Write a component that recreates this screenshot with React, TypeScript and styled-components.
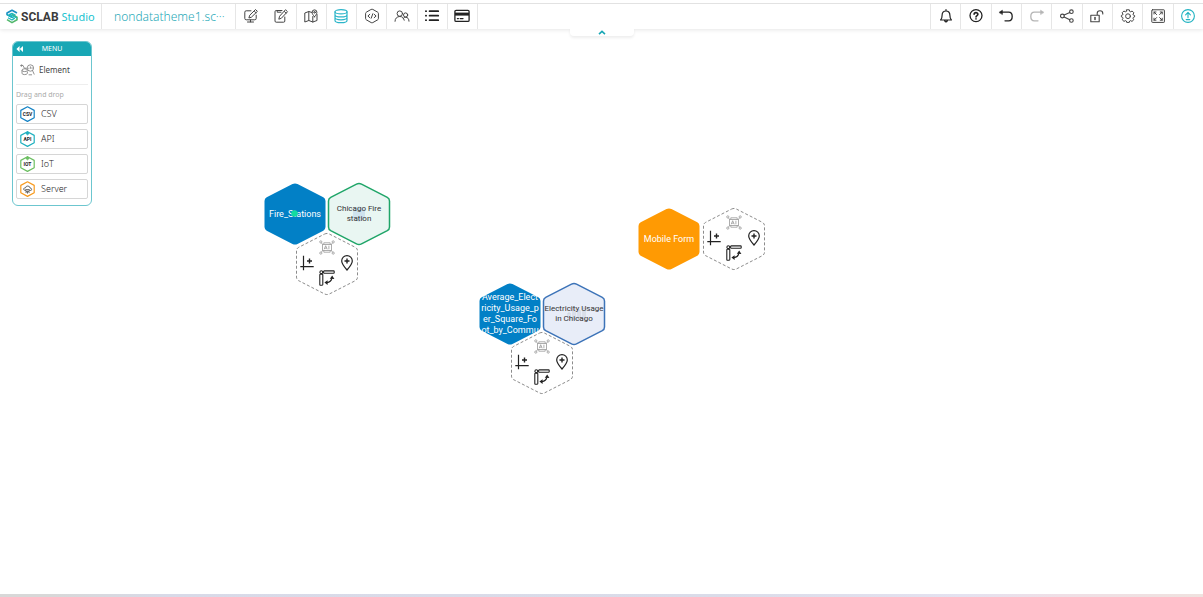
import React from "react";
import styled, { createGlobalStyle, css } from "styled-components";

const TEAL = "#18a7b5";

const GlobalStyle = createGlobalStyle`
  *, *::before, *::after { box-sizing: border-box; }
  body { margin: 0; background: #fff; color: #333; font-family: "Noto Sans", "Open Sans", sans-serif; }
  button { margin: 0; padding: 0; border: 0; background: none; color: inherit; font: inherit; cursor: pointer; }
  svg { display: block; flex-shrink: 0; }
`;

const Page = styled.div`
  display: flex;
  flex-direction: column;
  min-height: 100vh;
`;

const TopBar = styled.header`
  position: relative;
  z-index: 2;
  display: flex;
  height: 29px;
  padding-top: 3px;
  background: #fff;
  box-shadow: 0 1px 4px rgba(0, 0, 0, 0.1);
`;

const BarInner = styled.div`
  display: flex;
  flex: 1;
  background: #fff;
  border-top: 1px solid #e2e2e2;
`;

const Brand = styled.a`
  display: flex;
  align-items: center;
  width: 102px;
  padding-left: 6px;
  gap: 3px;
  border-right: 1px solid #e6e6e6;
  text-decoration: none;
  white-space: nowrap;
`;

const BrandName = styled.span`
  font: bold 12px/24px "Roboto", sans-serif;
  color: #3c3c3c;
`;

const BrandSuffix = styled.span`
  font: 11px/24px "Noto Sans", sans-serif;
  color: #19c3cf;
`;

const ProjectName = styled.button`
  width: 134px;
  padding-left: 12px;
  border-right: 1px solid #e6e6e6;
  font: 300 12px/24px "Noto Sans", sans-serif;
  color: #1fa9b7;
  text-align: left;
  white-space: nowrap;
`;

const Tools = styled.div<{ $count: number; $width: number; $end?: boolean }>`
  display: grid;
  grid-template-columns: repeat(${(p) => p.$count}, 1fr);
  width: ${(p) => p.$width}px;
  ${(p) => p.$end && css`margin-left: auto;`}
`;

const Tool = styled.button<{ $color?: string; $edge?: "left" | "right" | "none" }>`
  display: flex;
  align-items: center;
  justify-content: center;
  padding-bottom: 1px;
  color: ${(p) => p.$color || "#444"};
  ${(p) => p.$edge === "left" && css`border-left: 1px solid #e6e6e6;`}
  ${(p) => p.$edge === "right" && css`border-right: 1px solid #e6e6e6;`}
`;

const CollapseTab = styled.button`
  position: absolute;
  top: 28px;
  left: 50%;
  display: flex;
  align-items: center;
  justify-content: center;
  width: 64px;
  height: 8px;
  transform: translateX(-50%);
  border-radius: 0 0 4px 4px;
  background: #fff;
  box-shadow: 0 2px 3px rgba(0, 0, 0, 0.07);
`;

const Canvas = styled.main`
  position: relative;
  flex: 1;
`;

const Menu = styled.aside`
  position: absolute;
  top: 12px;
  left: 12px;
  z-index: 1;
  width: 80px;
  border: 1px solid #6cc6cf;
  border-radius: 6px;
  background: #fff;
  overflow: hidden;
`;

const MenuHead = styled.button`
  display: grid;
  grid-template-columns: 14px 1fr 14px;
  align-items: center;
  width: 100%;
  height: 14px;
  background: ${TEAL};
  color: #fff;
  font: 7px/14px "Noto Sans", sans-serif;
`;

const MenuBody = styled.div`
  display: flex;
  flex-direction: column;
  padding: 0 3px 6px;
`;

const ElementRow = styled.button`
  display: flex;
  align-items: center;
  gap: 4px;
  height: 29px;
  padding-left: 4px;
  border-bottom: 1px solid #eee;
  font: 8px/12px "Noto Sans", sans-serif;
  color: #444;
`;

const Hint = styled.p`
  margin: 4px 0 3px;
  font: 7px/12px "Noto Sans", sans-serif;
  color: #aaa;
`;

const SourceList = styled.div`
  display: flex;
  flex-direction: column;
  gap: 5px;
`;

const Source = styled.button`
  display: flex;
  align-items: center;
  gap: 6px;
  height: 20px;
  padding-left: 3px;
  border: 1px solid #d6d6d6;
  border-radius: 2px;
  font: 300 9px/16px "Noto Sans", sans-serif;
  color: #222;
`;

const Node = styled.div<{ $x: number; $y: number }>`
  position: absolute;
  left: ${(p) => p.$x}px;
  top: ${(p) => p.$y}px;
  display: grid;
  width: 64px;
  height: 64px;
  > * { grid-area: 1 / 1; }
`;

const NodeText = styled.div<{ $solid?: boolean }>`
  position: relative;
  align-self: center;
  justify-self: center;
  width: 60px;
  max-height: 44px;
  overflow: hidden;
  text-align: center;
  overflow-wrap: anywhere;
  font-family: "Roboto", sans-serif;
  ${(p) =>
    p.$solid
      ? css`font-size: 9px; line-height: 11px; color: #fff;`
      : css`font-size: 8px; line-height: 10px; color: #333;`}
`;

const Actions = styled.div`
  position: relative;
  display: grid;
  grid-template: "ai ai ai" 16px "axis . pin" 16px "ruler ruler ruler" 14px / 20px 20px 20px;
  place-content: center;
  padding-bottom: 4px;
`;

const Action = styled.button<{ $area: string }>`
  grid-area: ${(p) => p.$area};
  display: flex;
  align-items: center;
  justify-content: center;
  color: #222;
`;

const StatusStrip = styled.footer`
  height: 3px;
  background: linear-gradient(90deg, #d8d8d8 0, #d8d8d8 4%, #d8dae8 14%, #dadce9 60%, #e4e2f0 80%, #efdfe6 88%, #efe2df 100%);
`;

type IconProps = { size?: number; w?: number; children: React.ReactNode };
const Icon = ({ size = 16, w = 1, children }: IconProps) => (
  <svg width={size} height={size} viewBox="0 0 16 16" fill="none" stroke="currentColor" strokeWidth={w} strokeLinecap="round" strokeLinejoin="round" aria-hidden="true">
    {children}
  </svg>
);

const DesignIcon = () => (
  <Icon>
    <path d="M8 2.8H3.2Q1.8 2.8 1.8 4.2V10.4Q1.8 11.8 3.2 11.8H11.8Q13.2 11.8 13.2 10.4V7.2M7.5 12V13.8M4.5 14H10.5" />
    <path d="M12.8 1.8L14.4 3.4L8.4 9.2L5.9 10L6.6 7.6ZM11.4 3.2L13 4.8" />
  </Icon>
);
const FormIcon = () => (
  <Icon>
    <path d="M9 2.5H3.2Q2 2.5 2 3.7V13Q2 14.2 3.2 14.2H10.6Q11.8 14.2 11.8 13V9M4.2 2.5V4.2H8" />
    <path d="M12.8 2L14.5 3.7L8.3 10.3L5.8 11.2L6.5 8.6ZM11.4 3.5L13.1 5.2" />
  </Icon>
);
const MapIcon = () => (
  <Icon>
    <path d="M9 4.5L5.8 3.5L1.8 5V14L5.8 12.5L9.8 14L14 12.5V6.5M5.8 3.5V12.5M9.8 8.5V14" />
    <path d="M11.5 8.8C9.9 6.9 9.1 5.6 9.1 4.3A2.4 2.4 0 0 1 13.9 4.3C13.9 5.6 13.1 6.9 11.5 8.8Z" />
    <circle cx="11.5" cy="4.3" r=".8" />
  </Icon>
);
const DatabaseIcon = () => (
  <Icon w={1.2}>
    <ellipse cx="8" cy="3.8" rx="6" ry="2.1" />
    <path d="M2 3.8V12.4C2 13.6 4.7 14.6 8 14.6S14 13.6 14 12.4V3.8M2 6.7C2 7.9 4.7 8.9 8 8.9S14 7.9 14 6.7M2 9.6C2 10.8 4.7 11.8 8 11.8S14 10.8 14 9.6" />
  </Icon>
);
const CodeIcon = () => (
  <Icon>
    <path d="M7.2 1.4Q8 1 8.8 1.4L13.7 4.2Q14.4 4.6 14.4 5.4V10.6Q14.4 11.4 13.7 11.8L8.8 14.6Q8 15 7.2 14.6L2.3 11.8Q1.6 11.4 1.6 10.6V5.4Q1.6 4.6 2.3 4.2Z" />
    <path d="M5.8 6.3L3.9 8L5.8 9.7M10.2 6.3L12.1 8L10.2 9.7M8.8 5.8L7.2 10.2" />
  </Icon>
);
const UsersIcon = () => (
  <Icon>
    <circle cx="5.8" cy="5.6" r="2.7" />
    <path d="M1 13.3C1 10.4 3 8.5 5.8 8.5S9.6 10 10.2 12.2" />
    <circle cx="11.6" cy="7" r="2.1" />
    <path d="M9.4 10.2C10 9.5 10.7 9.2 11.6 9.2C13.7 9.2 15 10.9 15 13.2" />
  </Icon>
);
const ListIcon = () => (
  <Icon w={1.8}>
    <path d="M5.6 3.2H14.2M5.6 7.7H14.2M5.6 12.2H14.2M1.9 3.2H2.1M1.9 7.7H2.1M1.9 12.2H2.1" />
  </Icon>
);
const CardIcon = () => (
  <Icon w={1.3}>
    <rect x=".9" y="2.4" width="14.2" height="11" rx="1.2" />
    <path d="M1 4.6H15V7.6H1Z" fill="currentColor" stroke="none" />
    <path d="M3.4 10.6H4.4M6.2 10.6H9" />
  </Icon>
);
const BellIcon = () => (
  <Icon w={1.2}>
    <path d="M2.6 12H13.4C12 10.7 11.9 9.5 11.9 7.2C11.9 4.7 10.3 3 8 3S4.1 4.7 4.1 7.2C4.1 9.5 4 10.7 2.6 12ZM8 1.6V3" />
    <path d="M6.6 12.6Q8 15.2 9.4 12.6" fill="currentColor" />
  </Icon>
);
const HelpIcon = () => (
  <Icon w={1.3}>
    <circle cx="8" cy="7.6" r="6" />
    <path d="M6.1 6.3C6.1 4 9.9 4 9.9 6.3C9.9 7.6 8 7.5 8 9M8 10.9V11" strokeWidth="1.6" />
  </Icon>
);
const UndoIcon = ({ flip }: { flip?: boolean }) => (
  <Icon w={1.3}>
    <g transform={flip ? "matrix(-1 0 0 1 16 0)" : undefined}>
      <path d="M3 4.2H10.6Q14.2 4.2 14.2 8.4T10.6 12.8H7" />
      <path d="M1.3 4.2L4.4 2.2V6.2Z" fill="currentColor" strokeWidth=".6" />
    </g>
  </Icon>
);
const ShareIcon = () => (
  <Icon w={1.1}>
    <circle cx="3.4" cy="8" r="1.9" />
    <circle cx="12.4" cy="3.7" r="1.8" />
    <circle cx="12.4" cy="12.5" r="1.8" />
    <path d="M5.1 7.1L10.8 4.5M5.1 8.9L10.8 11.7" />
  </Icon>
);
const UnlockIcon = () => (
  <Icon w={1.1}>
    <path d="M1.8 7.2H10.2V13.8H1.8ZM8.2 7V5.2Q8.2 2.8 11 2.8T13.8 5.4V6" />
    <path d="M6 9.6V11.4" strokeWidth="1.5" />
  </Icon>
);
const GearIcon = () => (
  <Icon>
    <path d="M6.7 1.8H9.3L9.7 3.4L10.7 3.8L12.1 3L13.9 4.8L13 6.2L13.4 7.1L14.6 7.5V8.9L13.4 9.3L13 10.3L13.8 11.7L12 13.4L10.6 12.6L9.7 13L9.3 14.4H6.7L6.3 13L5.4 12.6L4 13.4L2.2 11.7L3 10.3L2.6 9.3L1.4 8.9V7.4L2.6 7L3 6.1L2.1 4.8L3.9 3L5.3 3.8L6.3 3.4Z" />
    <circle cx="8" cy="8.2" r="2.4" />
  </Icon>
);
const ExpandIcon = () => (
  <Icon>
    <rect x="1.8" y="1.8" width="12.6" height="12.6" rx=".6" />
    <path d="M6.6 6.6L4 4M4 6V4H6M9.6 6.6L12.2 4M10.2 4H12.2V6M6.6 9.6L4 12.2M4 10.2V12.2H6M9.6 9.6L12.2 12.2M12.2 10.2V12.2H10.2" />
  </Icon>
);
const PublishIcon = () => (
  <Icon w={1.1}>
    <circle cx="8" cy="8" r="6.4" />
    <path d="M8 9.8V4.6M5.6 6.8L8 4.4L10.4 6.8M6.2 11.6H9.8" />
  </Icon>
);

const LogoMark = () => (
  <svg width="12" height="15" viewBox="0 0 12 15" fill="none" strokeWidth="1.6" strokeLinejoin="round" aria-hidden="true">
    <path d="M11 4L6 1.2L1 4V5.6L6 8.2" stroke="#1a8fc4" />
    <path d="M1 10.6L6 13.6L11 10.8V8.2L6 5.4" stroke="#52b86d" />
    <path d="M1 5.6L8.4 9.6L6 11L2 8.8M9.6 6.2L6 4.4L3.6 5.4L11 9" stroke="#18b4bd" strokeWidth="1.2" />
  </svg>
);

const ElementIcon = () => (
  <svg width="15" height="12" viewBox="0 0 15 12" fill="none" stroke="#777" strokeWidth=".8" aria-hidden="true">
    <circle cx="10.4" cy="4" r="3.2" />
    <path d="M12.5 6.5L14.3 10.5M8.8 4.8V3.8M10.4 4.8V2.4M12 4.8V3.3M.8 1.4H3L4.3 4.2H6.8M2 6.2V9.2Q2 10.6 4.6 10.6T7.4 9.2V7.4M8.6 10.8H12" />
    <ellipse cx="4.7" cy="6.2" rx="2.7" ry="1.4" />
    <circle cx="1.4" cy="1.6" r=".7" />
  </svg>
);

const BadgeText = styled.text`
  font: bold 5px "Roboto", sans-serif;
  fill: #222;
  text-anchor: middle;
`;

const SourceBadge = ({ color, label, up }: { color: string; label?: string; up?: boolean }) => (
  <svg width="15" height="16" viewBox="0 0 15 16" fill="none" stroke={color} strokeWidth="1.2" strokeLinejoin="round" aria-hidden="true">
    <path d="M7.5 .8L14.2 4.4V11.8L7.5 15.4L.8 11.8V4.4Z" />
    {up && <path d="M7.5 .2L9.2 2.4L7.5 4L5.8 2.4Z" fill={color} strokeWidth=".6" />}
    {label ? (
      <BadgeText x="7.5" y="10.2" stroke="none">{label}</BadgeText>
    ) : (
      <path d="M4.8 9.4Q3.4 9 3.7 7.8T5.4 6.9Q6 4.8 7.9 5T10.1 7Q11.7 7.2 11.6 8.5T10.2 9.5M5.6 8.6H9.4V10.2H5.6ZM5.8 12L6.6 10.4M7.5 12.6V10.4M9.3 12L8.5 10.4" stroke="#444" strokeWidth=".8" />
    )}
  </svg>
);

const HEX = "M29.5 2.1Q32 .8 34.5 2.1L60.3 15.3Q62.5 16.5 62.5 19V45Q62.5 47.5 60.3 48.7L34.5 61.9Q32 63.2 29.5 61.9L3.7 48.7Q1.5 47.5 1.5 45V19Q1.5 16.5 3.7 15.3Z";

const Hex = ({ fill, stroke, dashed, children }: { fill: string; stroke?: string; dashed?: boolean; children?: React.ReactNode }) => (
  <svg width="64" height="64" viewBox="0 0 64 64" aria-hidden="true">
    <path d={HEX} fill={fill} stroke={stroke} strokeWidth={dashed ? 1 : 1.5} strokeDasharray={dashed ? "3 2" : undefined} />
    {children}
  </svg>
);

const AddActions = ({ x, y }: { x: number; y: number }) => (
  <Node $x={x} $y={y}>
    <Hex fill="#fff" stroke="#8c8c8c" dashed />
    <Actions>
      <Action $area="ai" aria-label="AI">
        <svg width="16" height="15" viewBox="0 0 16 15" fill="none" stroke="#999" strokeWidth=".8" aria-hidden="true">
          <rect x="3.6" y="4.4" width="8.8" height="6.2" />
          <path d="M5.2 9.3L6.7 5.7L8.2 9.3M5.8 8.2H7.6M9.9 5.7V9.3M3.6 4.4L2.4 2.8M12.4 4.4L13.6 2.8M3.6 10.6L2.4 12.2M12.4 10.6L13.6 12.2M4.8 4.4V2.8H11.2V4.4M4.8 10.6V12.2H11.2V10.6" />
          <circle cx="1.8" cy="1.9" r="1.1" />
          <circle cx="14.2" cy="1.9" r="1.1" />
          <circle cx="1.8" cy="13.1" r="1.1" />
          <circle cx="14.2" cy="13.1" r="1.1" />
        </svg>
      </Action>
      <Action $area="axis" aria-label="Add chart">
        <svg width="14" height="16" viewBox="0 0 14 16" fill="none" stroke="currentColor" strokeWidth="1.2" aria-hidden="true">
          <path d="M3.5 .8V15.2M.3 11.7H13.7" />
          <path d="M7 6H12M9.5 3.5V8.5" strokeWidth="1.4" />
        </svg>
      </Action>
      <Action $area="pin" aria-label="Add map">
        <svg width="12" height="16" viewBox="0 0 12 16" fill="none" stroke="currentColor" strokeWidth="1.2" aria-hidden="true">
          <path d="M6 15C2.6 11 .7 8.3 .7 5.9A5.3 5.3 0 0 1 11.3 5.9C11.3 8.3 9.4 11 6 15Z" />
          <path d="M3.5 6H8.5M6 3.5V8.5" strokeWidth="1.4" />
        </svg>
      </Action>
      <Action $area="ruler" aria-label="Pivot">
        <svg width="16" height="16" viewBox="0 0 16 16" fill="none" stroke="currentColor" strokeWidth="1.1" aria-hidden="true">
          <rect x=".8" y="4.2" width="3" height="11" rx=".6" />
          <rect x="4.6" y=".9" width="10.6" height="2.4" rx=".6" />
          <circle cx="2.3" cy="2.2" r="1.4" />
          <path d="M8 12.6Q12 12.2 12.8 8.4" strokeWidth="1.2" />
          <path d="M5.4 12.6L8.6 10.2V15ZM13.2 5.6L10.8 8.8L15.4 9Z" fill="currentColor" stroke="none" />
        </svg>
      </Action>
    </Actions>
  </Node>
);

const Marker = styled.svg`
  position: relative;
`;

export default function App() {
  return (
    <Page>
      <GlobalStyle />
      <TopBar>
        <BarInner>
          <Brand href="#">
            <LogoMark />
            <BrandName>SCLAB</BrandName>
            <BrandSuffix>Studio</BrandSuffix>
          </Brand>
          <ProjectName>nondatatheme1.sc···</ProjectName>
          <Tools $count={8} $width={242}>
            <Tool $edge="none" aria-label="Design"><DesignIcon /></Tool>
            <Tool $edge="right" aria-label="Form"><FormIcon /></Tool>
            <Tool $edge="right" aria-label="Map"><MapIcon /></Tool>
            <Tool $edge="right" $color="#2bb5c9" aria-label="Data"><DatabaseIcon /></Tool>
            <Tool $edge="right" aria-label="Code"><CodeIcon /></Tool>
            <Tool $edge="right" aria-label="Members"><UsersIcon /></Tool>
            <Tool $edge="right" $color="#222" aria-label="List"><ListIcon /></Tool>
            <Tool $edge="right" $color="#222" aria-label="Payment"><CardIcon /></Tool>
          </Tools>
          <Tools $count={9} $width={273} $end>
            <Tool $edge="left" $color="#222" aria-label="Notifications"><BellIcon /></Tool>
            <Tool $edge="left" $color="#222" aria-label="Help"><HelpIcon /></Tool>
            <Tool $edge="left" $color="#222" aria-label="Undo"><UndoIcon /></Tool>
            <Tool $edge="left" $color="#b5b5b5" aria-label="Redo"><UndoIcon flip /></Tool>
            <Tool $edge="left" aria-label="Share"><ShareIcon /></Tool>
            <Tool $edge="left" aria-label="Unlock"><UnlockIcon /></Tool>
            <Tool $edge="left" aria-label="Settings"><GearIcon /></Tool>
            <Tool $edge="left" aria-label="Full screen"><ExpandIcon /></Tool>
            <Tool $edge="left" $color="#22b3c2" aria-label="Publish"><PublishIcon /></Tool>
          </Tools>
        </BarInner>
        <CollapseTab aria-label="Collapse toolbar">
          <svg width="8" height="5" viewBox="0 0 8 5" fill="none" stroke={TEAL} strokeWidth="1.6" aria-hidden="true">
            <path d="M1 4.2L4 1.4L7 4.2" />
          </svg>
        </CollapseTab>
      </TopBar>

      <Canvas>
        <Menu>
          <MenuHead>
            <svg width="14" height="8" viewBox="0 0 14 8" fill="#fff" aria-hidden="true">
              <path d="M3.4 4L6.6 1V7ZM6.8 4L10 1V7Z" />
            </svg>
            <span>MENU</span>
          </MenuHead>
          <MenuBody>
            <ElementRow>
              <ElementIcon />
              Element
            </ElementRow>
            <Hint>Drag and drop</Hint>
            <SourceList>
              <Source><SourceBadge color="#1583c5" label="CSV" />CSV</Source>
              <Source><SourceBadge color="#1fb0bf" label="API" up />API</Source>
              <Source><SourceBadge color="#6cbf62" label="IOT" up />IoT</Source>
              <Source><SourceBadge color="#f79a1e" />Server</Source>
            </SourceList>
          </MenuBody>
        </Menu>

        <Node $x={263} $y={153}>
          <Hex fill="#0280c6" />
          <NodeText $solid>Fire_Stations</NodeText>
          <Marker width="64" height="64" viewBox="0 0 64 64" aria-hidden="true">
            <circle cx="31.5" cy="31.5" r="3.2" fill="#12dca0" />
          </Marker>
        </Node>
        <Node $x={327} $y={153}>
          <Hex fill="#e9f6f2" stroke="#1fa568">
            <path d="M32 24L38 27.5V36.5L32 40L26 36.5V27.5Z" fill="#cfe3ee" />
          </Hex>
          <NodeText>Chicago Fire<br />station</NodeText>
        </Node>
        <AddActions x={295} y={203} />

        <Node $x={478} $y={253}>
          <Hex fill="#0280c6" />
          <NodeText $solid>Average_Elect<br />ricity_Usage_p<br />er_Square_Fo<br />ot_by_Commu</NodeText>
        </Node>
        <Node $x={542} $y={253}>
          <Hex fill="#e8edf8" stroke="#3c73b8">
            <path d="M26 38V31H28V38M31 38V25H33V38M36 38V28H38V38M41 38V26H43V38" fill="none" stroke="#c6cbd6" strokeWidth=".8" />
          </Hex>
          <NodeText>Electricity Usage<br />in Chicago</NodeText>
        </Node>
        <AddActions x={510} y={302} />

        <Node $x={637} $y={178}>
          <Hex fill="#ff9a03" />
          <NodeText $solid>Mobile Form</NodeText>
        </Node>
        <AddActions x={702} y={178} />
      </Canvas>
      <StatusStrip />
    </Page>
  );
}
